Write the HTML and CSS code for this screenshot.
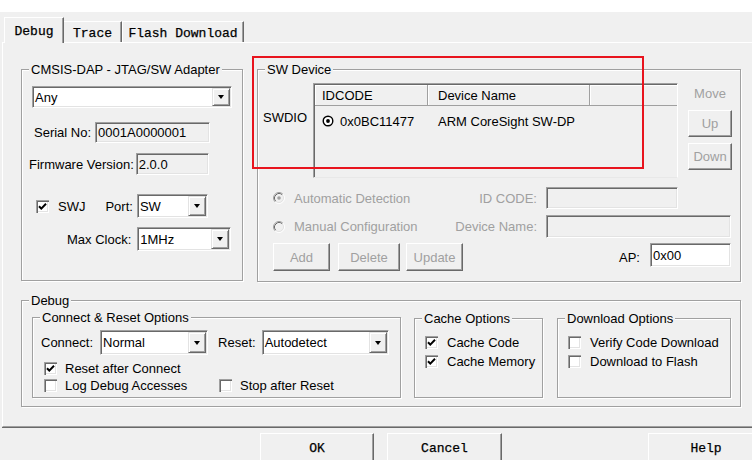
FILE: index.html
```html
<!DOCTYPE html>
<html lang="en">
<head>
<meta charset="utf-8">
<title>Debug Settings</title>
<link rel="stylesheet" href="styles.css">
</head>
<body>
<div class="topstrip"></div>
<div class="tabs">
  <div class="tab tab-debug">Debug</div>
  <div class="tab tab-trace">Trace</div>
  <div class="tab tab-flash">Flash Download</div>
</div>
<div class="panel">
  <div class="toprow">
    <div class="group g-adapter">
      <span class="legend">CMSIS-DAP - JTAG/SW Adapter</span>
      <div class="row r-any">
        <div class="combo c-any"><span class="val">Any</span><span class="arrow"></span></div>
      </div>
      <div class="row r-serial">
        <span>Serial No:</span>
        <div class="edit dis e-serial">0001A0000001</div>
      </div>
      <div class="row r-fw">
        <span>Firmware Version:</span>
        <div class="edit dis e-fw">2.0.0</div>
      </div>
      <div class="row r-swj">
        <span class="cb"><svg width="13" height="13" viewBox="0 0 13 13"><path d="M3 6.2 L5.3 8.6 L10 3.8" fill="none" stroke="#000" stroke-width="2"/></svg></span>
        <span class="swj">SWJ</span>
        <span class="port">Port:</span>
        <div class="combo c-port"><span class="val">SW</span><span class="arrow"></span></div>
      </div>
      <div class="row r-clock">
        <span>Max Clock:</span>
        <div class="combo c-clock"><span class="val">1MHz</span><span class="arrow"></span></div>
      </div>
    </div>

    <div class="group g-swdev">
      <span class="legend">SW Device</span>
      <div class="dev-top">
        <span class="swdio">SWDIO</span>
        <div class="list">
          <div class="lhead">
            <span class="hc hc1">IDCODE</span>
            <span class="hc hc2">Device Name</span>
            <span class="hc hc3"></span>
          </div>
          <div class="lrow">
            <span class="lc1"><svg width="12" height="12" viewBox="0 0 12 12"><circle cx="6" cy="6" r="4.8" fill="#fff" stroke="#000" stroke-width="1.4"/><circle cx="6" cy="6" r="1.9" fill="#000"/></svg><span class="lt">0x0BC11477</span></span>
            <span class="lc2">ARM CoreSight SW-DP</span>
          </div>
        </div>
        <div class="move">
          <span class="move-lbl">Move</span>
          <div class="btn dis b-up">Up</div>
          <div class="btn dis b-down">Down</div>
        </div>
      </div>
      <div class="drow d-a">
        <span class="opt"><svg width="12" height="12" viewBox="0 0 12 12"><circle cx="6" cy="6" r="5.5" fill="#f0f0f0"/><path d="M2.11 9.89 A5.5 5.5 0 0 1 9.89 2.11" fill="none" stroke="#a0a0a0" stroke-width="1"/><path d="M9.89 2.11 A5.5 5.5 0 0 1 2.11 9.89" fill="none" stroke="#fff" stroke-width="1"/><path d="M2.82 9.18 A4.5 4.5 0 0 1 9.18 2.82" fill="none" stroke="#696969" stroke-width="1"/><path d="M9.18 2.82 A4.5 4.5 0 0 1 2.82 9.18" fill="none" stroke="#e3e3e3" stroke-width="1"/><circle cx="6" cy="6" r="1.8" fill="#a0a0a0"/></svg><span class="ot">Automatic Detection</span></span>
        <span class="dlbl">ID CODE:</span>
        <div class="edit dis e-id"></div>
      </div>
      <div class="drow d-b">
        <span class="opt"><svg width="12" height="12" viewBox="0 0 12 12"><circle cx="6" cy="6" r="5.5" fill="#f0f0f0"/><path d="M2.11 9.89 A5.5 5.5 0 0 1 9.89 2.11" fill="none" stroke="#a0a0a0" stroke-width="1"/><path d="M9.89 2.11 A5.5 5.5 0 0 1 2.11 9.89" fill="none" stroke="#fff" stroke-width="1"/><path d="M2.82 9.18 A4.5 4.5 0 0 1 9.18 2.82" fill="none" stroke="#696969" stroke-width="1"/><path d="M9.18 2.82 A4.5 4.5 0 0 1 2.82 9.18" fill="none" stroke="#e3e3e3" stroke-width="1"/></svg><span class="ot">Manual Configuration</span></span>
        <span class="dlbl">Device Name:</span>
        <div class="edit dis e-name"></div>
      </div>
      <div class="drow d-c">
        <div class="btn dis b-add">Add</div>
        <div class="btn dis b-del">Delete</div>
        <div class="btn dis b-upd">Update</div>
        <span class="ap">AP:</span>
        <div class="edit white e-ap">0x00</div>
      </div>
    </div>
  </div>

  <div class="group g-debug">
    <span class="legend">Debug</span>
    <div class="dbg-row">
      <div class="group g-conn">
        <span class="legend">Connect &amp; Reset Options</span>
        <div class="row c-row1">
          <span>Connect:</span>
          <div class="combo c-connect"><span class="val">Normal</span><span class="arrow"></span></div>
          <span class="reset-lbl">Reset:</span>
          <div class="combo c-reset"><span class="val">Autodetect</span><span class="arrow"></span></div>
        </div>
        <div class="row c-row2">
          <span class="cbi"><span class="cb"><svg width="13" height="13" viewBox="0 0 13 13"><path d="M3 6.2 L5.3 8.6 L10 3.8" fill="none" stroke="#000" stroke-width="2"/></svg></span><span class="t">Reset after Connect</span></span>
        </div>
        <div class="row c-row3">
          <span class="cbi cbi-log"><span class="cb"></span><span class="t">Log Debug Accesses</span></span>
          <span class="cbi"><span class="cb"></span><span class="t">Stop after Reset</span></span>
        </div>
      </div>
      <div class="group g-cache">
        <span class="legend">Cache Options</span>
        <div class="row s-row1">
          <span class="cbi"><span class="cb"><svg width="13" height="13" viewBox="0 0 13 13"><path d="M3 6.2 L5.3 8.6 L10 3.8" fill="none" stroke="#000" stroke-width="2"/></svg></span><span class="t2">Cache Code</span></span>
        </div>
        <div class="row s-row2">
          <span class="cbi"><span class="cb"><svg width="13" height="13" viewBox="0 0 13 13"><path d="M3 6.2 L5.3 8.6 L10 3.8" fill="none" stroke="#000" stroke-width="2"/></svg></span><span class="t2">Cache Memory</span></span>
        </div>
      </div>
      <div class="group g-dl">
        <span class="legend">Download Options</span>
        <div class="row s-row1">
          <span class="cbi"><span class="cb"></span><span class="t2">Verify Code Download</span></span>
        </div>
        <div class="row s-row2">
          <span class="cbi"><span class="cb"></span><span class="t2">Download to Flash</span></span>
        </div>
      </div>
    </div>
  </div>
</div>

<div class="btnrow">
  <div class="pbtn b-ok">OK</div>
  <div class="pbtn b-cancel">Cancel</div>
  <div class="pbtn b-help">Help</div>
</div>

<div class="annot"></div>
</body>
</html>
```

FILE: styles.css
```css
* { box-sizing: border-box; }
html, body { margin: 0; padding: 0; }
body {
  width: 752px; height: 460px; overflow: hidden; position: relative;
  background: #f0f0f0; color: #000;
  font-family: "Liberation Sans", Arial, sans-serif; font-size: 13px; line-height: 15px;
}
.topstrip { height: 12px; background: #fff; }

/* tabs */
.tabs {
  display: flex; align-items: flex-end; height: 30px; padding-left: 4px;
  font-family: "Liberation Mono", "DejaVu Sans Mono", monospace; font-size: 13px;
  -webkit-text-stroke: 0.25px #000;
}
.tab {
  flex: none; height: 21px; padding-top: 2px;
  border-top: 1px solid #fff; border-right: 1px solid #696969;
  box-shadow: inset -1px 0 0 #a0a0a0;
  display: flex; align-items: center; justify-content: center;
}
.tab-debug {
  width: 60px; height: 26px; margin-bottom: -1px; border-left: 1px solid #fff;
  background: #f0f0f0; position: relative; z-index: 1;
}
.tab-trace { width: 58px; }
.tab-flash { width: 122px; border-left: 1px solid #fff; }

/* panel */
.panel {
  margin-left: 2px; width: 760px; height: 385px;
  border-top: 1px solid #fff; border-left: 1px solid #fff; border-bottom: 1px solid #a0a0a0;
  box-shadow: 0 1px 0 #696969;
  padding: 26px 0 0 18px;
}
.toprow { display: flex; align-items: flex-start; }

.group {
  flex: none; position: relative; border: 1px solid #a0a0a0;
  box-shadow: inset 1px 1px 0 #fff, 1px 1px 0 #fff;
}
.legend {
  position: absolute; top: -8px; left: 7px; padding: 0 2px;
  background: #f0f0f0; white-space: nowrap;
}
.row { display: flex; align-items: center; }

/* controls */
.combo {
  flex: none; display: flex; background: #fff; padding: 1px;
  border: 1px solid; border-color: #a0a0a0 #fff #fff #a0a0a0;
  box-shadow: inset 1px 1px 0 #696969, inset -1px -1px 0 #e3e3e3;
}
.combo .val { flex: 1; padding-left: 1px; display: flex; align-items: center; }
.combo .arrow {
  flex: none; width: 18px; background: #f0f0f0;
  border: 1px solid; border-color: #e3e3e3 #696969 #696969 #e3e3e3;
  box-shadow: inset 1px 1px 0 #fff, inset -1px -1px 0 #a0a0a0;
  display: flex; align-items: center; justify-content: center;
}
.combo .arrow::after {
  content: ""; border-style: solid; border-width: 4px 3.5px 0 3.5px;
  border-color: #000 transparent transparent transparent;
}
.edit {
  flex: none; display: flex; align-items: center; padding-left: 2px;
  border: 1px solid; border-color: #a0a0a0 #fff #fff #a0a0a0;
  box-shadow: inset 1px 1px 0 #696969, inset -1px -1px 0 #e3e3e3;
}
.edit.dis { background: #f0f0f0; }
.edit.white { background: #fff; }
.cb {
  flex: none; width: 13px; height: 13px; display: block; background: #fff;
  box-shadow: inset 1px 1px 0 #a0a0a0, inset 2px 2px 0 #696969, inset -1px -1px 0 #fff, inset -2px -2px 0 #e3e3e3;
}
.cb svg { display: block; }
.btn {
  flex: none; display: flex; align-items: center; justify-content: center; background: #f0f0f0;
  border: 1px solid; border-color: #fff #696969 #696969 #fff;
  box-shadow: inset -1px -1px 0 #a0a0a0;
}
.btn.dis { color: #a0a0a0; }

/* adapter group */
.g-adapter { width: 222px; height: 212px; }
.r-any { margin-top: 16px; padding-left: 10px; }
.c-any { width: 200px; height: 22px; }
.r-serial { margin-top: 14px; padding-left: 12px; }
.e-serial { margin-left: 4px; width: 115px; height: 21px; }
.r-fw { margin-top: 10px; padding-left: 7px; }
.e-fw { margin-left: 2px; width: 73px; height: 22px; }
.r-swj { margin-top: 19px; padding-left: 14px; }
.swj { margin-left: 9px; }
.port { margin-left: 20px; }
.c-port { margin-left: 4px; width: 71px; height: 24px; }
.r-clock { margin-top: 9px; padding-left: 45px; }
.c-clock { margin-left: 6px; width: 94px; height: 24px; }

/* SW device group */
.g-swdev { margin-left: 14px; width: 484px; height: 213px; }
.dev-top { display: flex; align-items: flex-start; margin-top: 13px; }
.swdio { flex: none; width: 55px; padding-left: 5px; margin-top: 27px; }
.list {
  flex: none; width: 365px; height: 95px; padding: 1px 0 0 1px;
  border: 1px solid; border-color: #a0a0a0 #fff #e8e8e8 #a0a0a0;
  box-shadow: inset 1px 1px 0 #696969;
}
.lhead { display: flex; height: 21px; }
.hc {
  height: 21px; display: flex; align-items: center;
  border-right: 1px solid #a0a0a0; border-bottom: 1px solid #a0a0a0;
  box-shadow: inset 1px 1px 0 #fff;
}
.hc1 { width: 113px; padding-left: 7px; }
.hc2 { width: 162px; padding-left: 10px; }
.hc3 { flex: 1; border-right: none; }
.lrow { display: flex; align-items: center; height: 16px; margin-top: 7px; }
.lc1 { width: 113px; padding-left: 7px; display: flex; align-items: center; }
.lc1 svg { flex: none; }
.lt { margin-left: 6px; }
.lc2 { padding-left: 10px; }
.move { flex: none; margin-left: 10px; width: 44px; display: flex; flex-direction: column; }
.move-lbl { text-align: center; margin-top: 3px; color: #a0a0a0; }
.b-up { margin-top: 9px; height: 27px; }
.b-down { margin-top: 6px; height: 27px; }

.drow { display: flex; align-items: center; }
.opt { flex: none; width: 182px; padding-left: 15px; display: flex; align-items: center; color: #a0a0a0; }
.opt svg { flex: none; }
.ot { margin-left: 9px; }
.dlbl { flex: none; width: 97px; text-align: right; color: #a0a0a0; }
.d-a { margin-top: 9px; }
.e-id { margin-left: 9px; width: 132px; height: 22px; }
.d-b { margin-top: 6px; }
.e-name { margin-left: 9px; width: 185px; height: 23px; }
.d-c { margin-top: 5px; height: 28px; padding-left: 15px; }
.b-add { width: 57px; height: 28px; }
.b-del { margin-left: 8px; width: 62px; height: 28px; }
.b-upd { margin-left: 6px; width: 57px; height: 28px; }
.ap { margin-left: auto; }
.e-ap { align-self: flex-start; margin-left: 10px; margin-right: 9px; width: 81px; height: 24px; }

/* debug group */
.g-debug { width: 720px; height: 107px; margin-top: 18px; }
.dbg-row { display: flex; align-items: flex-start; margin-top: 16px; padding-left: 10px; }
.g-conn { width: 369px; height: 81px; }
.g-cache { margin-left: 13px; margin-top: 1px; width: 129px; height: 80px; }
.g-dl { margin-left: 14px; margin-top: 1px; width: 174px; height: 80px; }
.c-row1 { margin-top: 12px; padding-left: 8px; }
.c-connect { margin-left: 7px; width: 108px; height: 25px; }
.reset-lbl { margin-left: 10px; }
.c-reset { margin-left: 6px; width: 127px; height: 25px; }
.c-row2 { margin-top: 6px; padding-left: 11px; }
.c-row3 { margin-top: 2px; padding-left: 11px; }
.cbi { flex: none; display: flex; align-items: center; }
.cbi .t { margin-left: 8px; }
.cbi-log { width: 175px; }
.s-row1 { margin-top: 16px; padding-left: 10px; }
.s-row2 { margin-top: 4px; padding-left: 10px; }
.cbi .t2 { margin-left: 9px; }

/* bottom buttons */
.btnrow {
  display: flex; margin-top: 6px; padding-left: 260px;
  font-family: "Liberation Mono", "DejaVu Sans Mono", monospace; font-size: 13px;
  -webkit-text-stroke: 0.25px #000;
}
.pbtn {
  flex: none; height: 30px; display: flex; align-items: center; justify-content: center; background: #f0f0f0;
  border: 1px solid; border-color: #fff #696969 #696969 #fff;
  box-shadow: inset -1px -1px 0 #a0a0a0;
}
.b-ok { width: 114px; }
.b-cancel { margin-left: 13px; width: 115px; }
.b-help { margin-left: 146px; width: 116px; }

/* red annotation frame drawn over the screenshot */
.annot {
  position: absolute; left: 252px; top: 56px; width: 392px; height: 113px;
  border: 2px solid #e8141e;
}
```
